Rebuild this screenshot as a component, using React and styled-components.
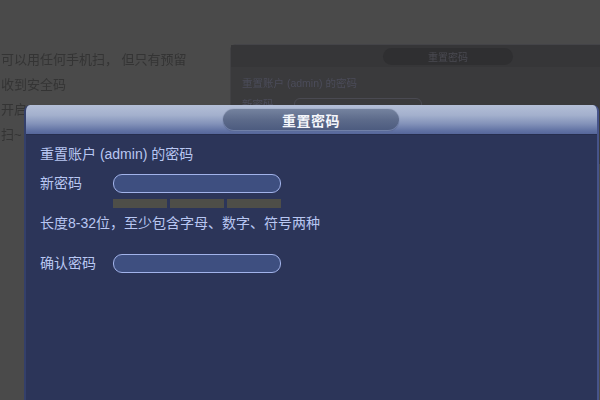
import React from 'react';
import styled, { createGlobalStyle } from 'styled-components';

const GlobalStyle = createGlobalStyle`
  html, body {
    margin: 0;
    padding: 0;
    background: #4a4a4a;
  }
  * {
    box-sizing: border-box;
  }
`;

const Stage = styled.div`
  position: relative;
  width: 600px;
  height: 400px;
  overflow: hidden;
  background: #4a4a4a;
  font-family: "Liberation Sans", "Noto Sans CJK SC", sans-serif;
`;

const Article = styled.div`
  display: flex;
  flex-direction: column;
  gap: 6.5px;
  padding: 51px 0 0 1px;
  color: #343434;
  font-size: 13px;
  line-height: 18.5px;
  filter: blur(0.4px);
`;

const BackDialog = styled.div`
  position: absolute;
  left: 230px;
  top: 44px;
  width: 400px;
  height: 120px;
  border-radius: 6px 0 0 0;
  background: #3a3a3c;
  border-top: 1px solid #444448;
  border-left: 1px solid #414144;
  display: flex;
  flex-direction: column;
  filter: blur(0.5px);
`;

const BackTitleBar = styled.div`
  height: 22px;
  display: flex;
  align-items: center;
  padding-left: 152px;
  background: #363638;
`;

const BackPill = styled.div`
  width: 130px;
  height: 17px;
  border-radius: 9px;
  background: #2f2f31;
  color: #4a4a52;
  font-size: 10px;
  display: flex;
  align-items: center;
  justify-content: center;
`;

const BackBody = styled.div`
  display: flex;
  flex-direction: column;
  gap: 6px;
  padding: 8px 0 0 11px;
  color: #4b4c5a;
  font-size: 10.5px;
`;

const BackRow = styled.div`
  display: flex;
  align-items: center;
  gap: 20px;
`;

const BackInput = styled.div`
  width: 128px;
  height: 12px;
  border-radius: 6px;
  border: 1px solid #4a4a52;
`;

const Dialog = styled.div`
  position: absolute;
  left: 24px;
  top: 105px;
  width: 575px;
  height: 300px;
  border-radius: 6px 6px 0 0;
  background: #2c3559;
  border-left: 2px solid #34406a;
  border-right: 2px solid #46548a;
  display: flex;
  flex-direction: column;
  overflow: hidden;
`;

const TitleBar = styled.div`
  height: 30px;
  flex-shrink: 0;
  display: flex;
  align-items: center;
  padding-left: 197px;
  background: linear-gradient(
    to bottom,
    #b4bfd7 0%,
    #a3b0cd 35%,
    #8392b9 65%,
    #5f70a2 90%,
    #56669a 100%
  );
  border-bottom: 1px solid #262e4e;
`;

const TitlePill = styled.div`
  width: 176px;
  height: 22px;
  border-radius: 11px;
  background: linear-gradient(to bottom, #75839f 0%, #5c6a8a 50%, #4b5a7e 100%);
  box-shadow: inset 0 -1px 0 rgba(150, 165, 210, 0.5), 0 0 1px rgba(40, 50, 80, 0.6);
  color: #f4f6fb;
  font-size: 14px;
  font-weight: 700;
  letter-spacing: 0.5px;
  display: flex;
  align-items: center;
  justify-content: center;
`;

const Body = styled.div`
  display: flex;
  flex-direction: column;
  padding: 9px 0 0 14px;
  color: #b9c7f2;
  font-size: 14px;
`;

const Heading = styled.div`
  height: 20px;
  line-height: 20px;
`;

const FieldRow = styled.div`
  display: flex;
  align-items: center;
  margin-top: ${(p) => p.$top}px;
`;

const Label = styled.div`
  width: 73px;
  line-height: 20px;
`;

const Input = styled.div`
  width: 168px;
  height: 19px;
  border-radius: 9px;
  border: 1.5px solid #a2b3ea;
  background: #3e4f80;
`;

const Strength = styled.div`
  display: flex;
  gap: 3px;
  margin: 6px 0 0 73px;
`;

const StrengthBar = styled.div`
  width: 54px;
  height: 9px;
  background: #4e4e48;
`;

const Hint = styled.div`
  margin-top: 5px;
  line-height: 20px;
`;

export default function App() {
  return (
    <>
      <GlobalStyle />
      <Stage>
        <Article>
          <div>可以用任何手机扫， 但只有预留</div>
          <div>收到安全码</div>
          <div>开启</div>
          <div>扫~</div>
        </Article>

        <BackDialog>
          <BackTitleBar>
            <BackPill>重置密码</BackPill>
          </BackTitleBar>
          <BackBody>
            <div>重置账户 (admin) 的密码</div>
            <BackRow>
              <span>新密码</span>
              <BackInput />
            </BackRow>
          </BackBody>
        </BackDialog>

        <Dialog>
          <TitleBar>
            <TitlePill>重置密码</TitlePill>
          </TitleBar>
          <Body>
            <Heading>重置账户 (admin) 的密码</Heading>
            <FieldRow $top={9}>
              <Label>新密码</Label>
              <Input />
            </FieldRow>
            <Strength>
              <StrengthBar />
              <StrengthBar />
              <StrengthBar />
            </Strength>
            <Hint>长度8-32位，至少包含字母、数字、符号两种</Hint>
            <FieldRow $top={20}>
              <Label>确认密码</Label>
              <Input />
            </FieldRow>
          </Body>
        </Dialog>
      </Stage>
    </>
  );
}
